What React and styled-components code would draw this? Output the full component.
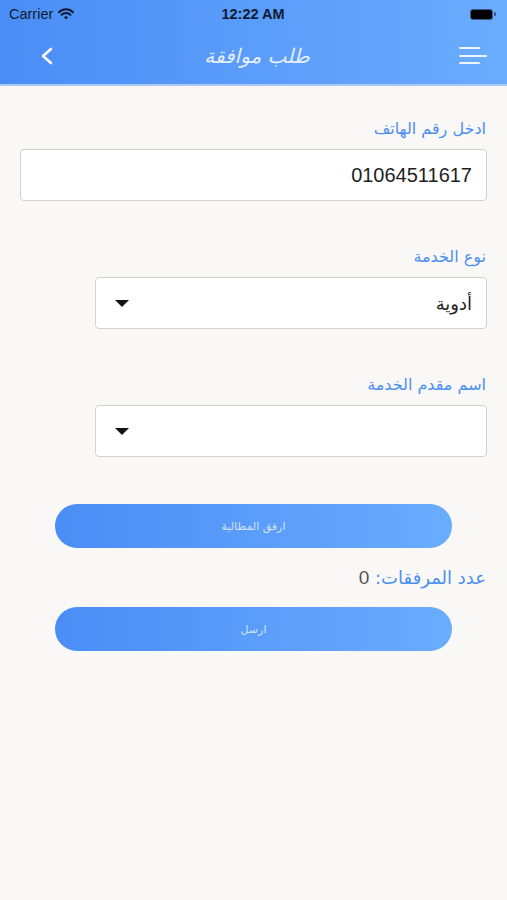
import React from "react";
import styled, { createGlobalStyle } from "styled-components";

const Global = createGlobalStyle`
  html, body { margin: 0; padding: 0; }
  body {
    background: #f9f8f6;
    font-family: "DejaVu Sans", "Liberation Sans", sans-serif;
  }
`;

const Page = styled.div`
  width: 507px;
  min-height: 900px;
  background: #f9f8f6;
  display: flex;
  flex-direction: column;
`;

const Header = styled.header`
  background: linear-gradient(90deg, #4a8df6 0%, #6aacfd 100%);
  border-bottom: 2px solid #a9c8f6;
  height: 84px;
  display: flex;
  flex-direction: column;
`;

const StatusBar = styled.div`
  height: 28px;
  display: grid;
  grid-template-columns: 1fr auto 1fr;
  align-items: center;
  padding: 0 10px 0 9px;
  color: #0f1b33;
  font-family: "Liberation Sans", "DejaVu Sans", sans-serif;
  font-size: 14.5px;
`;

const Carrier = styled.div`
  display: flex;
  align-items: center;
  gap: 5px;
`;

const Time = styled.div`
  font-weight: 700;
  font-size: 14.5px;
`;

const Battery = styled.div`
  justify-self: end;
  display: flex;
  align-items: center;
  margin-right: 1px;
`;

const BatteryBody = styled.div`
  width: 21px;
  height: 9px;
  border-radius: 3px;
  background: #000;
  border: 1.5px solid #3b5a8a;
`;

const BatteryTip = styled.div`
  width: 2px;
  height: 4px;
  margin-left: 1px;
  border-radius: 0 1px 1px 0;
  background: #3b5a8a;
`;

const NavBar = styled.div`
  flex: 1;
  display: flex;
  align-items: center;
  justify-content: space-between;
  padding: 0 20px 0 33px;
`;

const Title = styled.div`
  direction: rtl;
  color: #e6eefc;
  font-size: 20px;
  font-style: italic;
  padding-right: 6px;
`;

const IconButton = styled.div`
  width: 28px;
  height: 28px;
  display: flex;
  align-items: center;
  justify-content: center;
`;

const Form = styled.main`
  direction: rtl;
  display: flex;
  flex-direction: column;
  padding: 33px 20px 0 20px;
`;

const Field = styled.div`
  display: flex;
  flex-direction: column;
  align-items: flex-start;
  margin-bottom: ${(p) => p.$mb || 46}px;
`;

const Label = styled.div`
  color: #4c8ff0;
  font-size: 16px;
  margin-bottom: 10px;
  padding-right: 1px;
  line-height: 20px;
`;

const Box = styled.div`
  width: ${(p) => p.$width}px;
  height: 52px;
  box-sizing: border-box;
  background: #fff;
  border: 1.5px solid #d2d2d2;
  border-radius: 4px;
  display: flex;
  align-items: center;
  justify-content: space-between;
  padding: 0 14px 0 19px;
  color: #1e1e1e;
  font-size: 19px;
`;

const Value = styled.span`
  direction: ${(p) => (p.$ltr ? "ltr" : "rtl")};
  font-family: ${(p) =>
    p.$ltr ? '"Liberation Sans", sans-serif' : '"DejaVu Sans", sans-serif'};
  font-size: ${(p) => (p.$ltr ? 20 : 18)}px;
`;

const Caret = styled.span`
  width: 0;
  height: 0;
  border-left: 7px solid transparent;
  border-right: 7px solid transparent;
  border-top: 7px solid #111;
`;

const Pill = styled.button`
  align-self: center;
  width: 397px;
  height: 44px;
  border: none;
  border-radius: 22px;
  background: linear-gradient(90deg, #4a8df6 0%, #6aacfd 100%);
  color: rgba(255, 255, 255, 0.72);
  font-family: "DejaVu Sans", sans-serif;
  font-size: 11px;
  direction: rtl;
  padding: 0;
`;

const Count = styled.div`
  margin: 18px 0 17px 0;
  font-size: 18px;
  line-height: 24px;
  padding-right: 1px;
  color: #4c8ff0;
`;

const CountNum = styled.span`
  color: #555;
  font-family: "Liberation Sans", sans-serif;
  font-size: 19px;
`;

export default function App() {
  return (
    <Page>
      <Global />
      <Header>
        <StatusBar>
          <Carrier>
            Carrier
            <svg width="16" height="12" viewBox="0 0 16 12">
              <path d="M1 4.2a10 10 0 0 1 14 0" stroke="#0f1b33" strokeWidth="2" fill="none" strokeLinecap="round" />
              <path d="M3.6 6.8a6.3 6.3 0 0 1 8.8 0" stroke="#0f1b33" strokeWidth="2" fill="none" strokeLinecap="round" />
              <path d="M8 11.5 L5.9 9.2 a3 3 0 0 1 4.2 0 Z" fill="#0f1b33" />
            </svg>
          </Carrier>
          <Time>12:22 AM</Time>
          <Battery>
            <BatteryBody />
            <BatteryTip />
          </Battery>
        </StatusBar>
        <NavBar>
          <IconButton>
            <svg width="14" height="18" viewBox="0 0 14 18">
              <path d="M11 2 L3 9 L11 16" stroke="#fff" strokeWidth="2.6" fill="none" strokeLinecap="round" strokeLinejoin="round" />
            </svg>
          </IconButton>
          <Title>طلب موافقة</Title>
          <IconButton>
            <svg width="28" height="20" viewBox="0 0 28 20">
              <path d="M1 2h19M1 10h27M1 17h19" stroke="#eef3fc" strokeWidth="2" strokeLinecap="round" />
            </svg>
          </IconButton>
        </NavBar>
      </Header>
      <Form>
        <Field>
          <Label>ادخل رقم الهاتف</Label>
          <Box $width={467}>
            <Value $ltr>01064511617</Value>
          </Box>
        </Field>
        <Field>
          <Label>نوع الخدمة</Label>
          <Box $width={392}>
            <Value>أدوية</Value>
            <Caret />
          </Box>
        </Field>
        <Field $mb={47}>
          <Label>اسم مقدم الخدمة</Label>
          <Box $width={392}>
            <Value></Value>
            <Caret />
          </Box>
        </Field>
        <Pill>ارفق المطالبة</Pill>
        <Count>
          عدد المرفقات: <CountNum>0</CountNum>
        </Count>
        <Pill>ارسل</Pill>
      </Form>
    </Page>
  );
}
